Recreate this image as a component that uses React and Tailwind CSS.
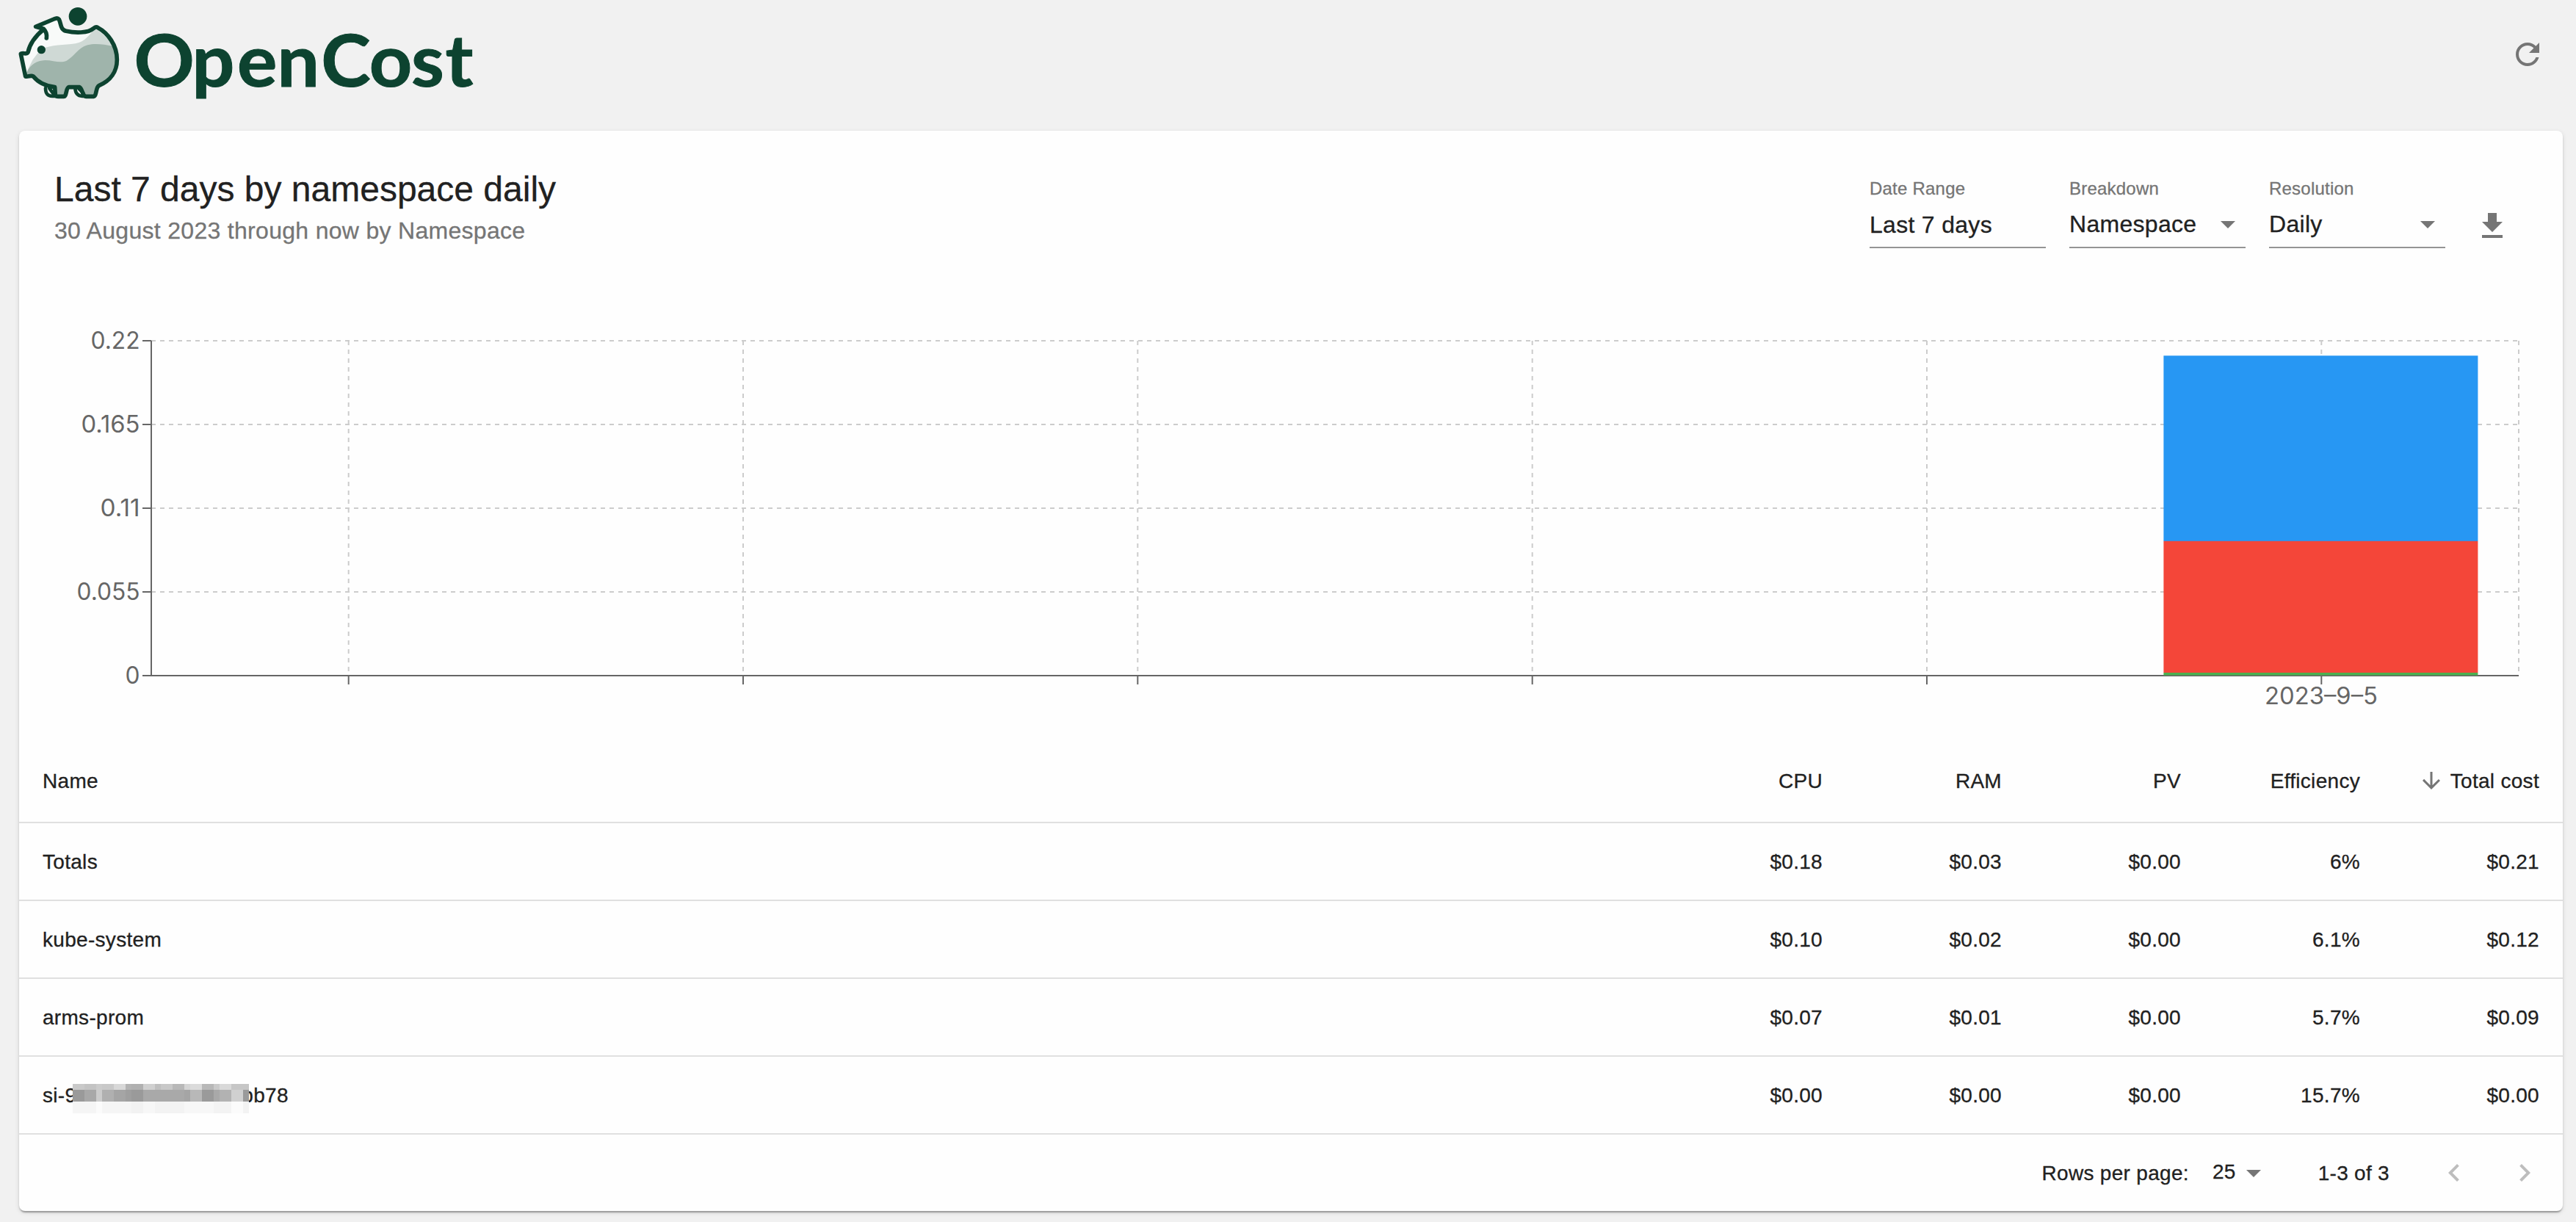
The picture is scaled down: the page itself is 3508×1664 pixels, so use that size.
const ROWS = [
  { name: "Totals", cells: ["$0.18", "$0.03", "$0.00", "6%", "$0.21"] },
  { name: "kube-system", cells: ["$0.10", "$0.02", "$0.00", "6.1%", "$0.12"] },
  { name: "arms-prom", cells: ["$0.07", "$0.01", "$0.00", "5.7%", "$0.09"] },
  { name: "si-9", tail: "bb78", cells: ["$0.00", "$0.00", "$0.00", "15.7%", "$0.00"] },
];

// Redaction mosaic: [span in 8px cells, colour]
const MOSAIC = [
  {
    h: "h-2",
    cells: [[2, "#c9c9c9"], [2, "#c3c3c3"], [1, "#cbcbcb"], [2, "#c8c8c8"], [2, "#d8d8d8"], [1, "#b3b3b3"], [2, "#b0b0b0"], [2, "#d0d0d0"], [1, "#bfbfbf"], [2, "#c8c8c8"], [2, "#b8b8b8"], [1, "#d5d5d5"], [2, "#dbdbdb"], [2, "#b8b8b8"], [1, "#cacaca"], [2, "#d9d9d9"], [3, "#c6c6c6"]],
  },
  {
    h: "h-4",
    cells: [[2, "#9a9a9a"], [2, "#a8a8a8"], [1, "#cccccc"], [2, "#b0b0b0"], [2, "#a5a5a5"], [1, "#9f9f9f"], [2, "#9a9a9a"], [7, "#a9a9a9"], [1, "#a5a5a5"], [2, "#b8b8b8"], [2, "#9a9a9a"], [1, "#a9a9a9"], [2, "#b2b2b2"], [2, "#d0d0d0"], [1, "#9a9a9a"]],
  },
  {
    h: "h-4",
    cells: [[4, "#f5f5f5"], [1, "#fbfbfb"], [5, "#f5f5f5"], [2, "#f2f2f2"], [2, "#f7f7f7"], [5, "#f3f3f3"], [3, "#f7f7f7"], [2, "#f7f7f7"], [3, "#f3f3f3"], [2, "#fbfbfb"], [1, "#f3f3f3"]],
  },
];

const Y_TICKS = [
  { label: "0.22", y: 464, w: 67 },
  { label: "0.165", y: 578, w: 80 },
  { label: "0.11", y: 692, w: 54 },
  { label: "0.055", y: 806, w: 86 },
  { label: "0", y: 920, w: 20 },
];

const X_TICKS = [474.7, 1012, 1549.3, 2086.7, 2624, 3161.3];

function Icon({ d, className }) {
  return (
    <svg viewBox="0 0 24 24" fill="currentColor" className={className}>
      <path d={d} />
    </svg>
  );
}

const ICONS = {
  refresh:
    "M17.65 6.35C16.2 4.9 14.21 4 12 4c-4.42 0-7.99 3.58-7.99 8s3.57 8 7.99 8c3.73 0 6.84-2.55 7.73-6h-2.08c-.82 2.33-3.04 4-5.65 4-3.31 0-6-2.69-6-6s2.69-6 6-6c1.66 0 3.14.69 4.22 1.78L13 11h7V4l-2.35 2.35z",
  dropDown: "M7 10l5 5 5-5z",
  download: "M19 9h-4V3H9v6H5l7 7 7-7zM5 18v2h14v-2H5z",
  arrowDown: "M20 12l-1.41-1.41L13 16.17V4h-2v12.17l-5.58-5.59L4 12l8 8 8-8z",
  left: "M15.41 16.59L10.83 12l4.58-4.59L14 6l-6 6 6 6 1.41-1.41z",
  right: "M8.59 16.59L13.17 12 8.59 7.41 10 6l6 6-6 6-1.41-1.41z",
};

function Logo() {
  return (
    <svg viewBox="0 0 660 160" className="block h-[160px] w-[660px]">
      <g transform="translate(20 4) scale(0.33333)">
        <path
          d="M330 99C304 122 250 123 210 115C186 110 190 84 181 67C176 58 165 64 155 68L84 97L118 106C86 132 62 164 54 202C46 210 34 202 24 208L44 300C54 304 64 294 76 300C96 325 130 338 164 344L166 380H206C212 366 208 344 220 344H266L286 382H328L340 340C390 320 418 280 418 232C418 172 384 130 330 99Z"
          fill="#f8faf9"
        />
        <path
          d="M330 105C302 130 290 158 248 166C204 172 150 170 106 190L74 232L50 280L44 300L76 300L420 240C416 176 380 138 330 105Z"
          fill="#cfd9d5"
        />
        <path
          d="M50 282C66 250 90 236 124 234C158 234 186 248 212 236C246 218 256 184 298 172C330 164 364 170 400 176C416 196 420 220 418 240C414 290 384 326 342 340L328 382H288L266 344H220L206 382H168L162 342C126 338 96 322 76 300L44 300Z"
          fill="#9fb4ab"
        />
        <path d="M126 346L162 346L166 380H148C128 376 126 362 126 346Z M246 344L270 344L286 380H266C248 374 246 360 246 344Z" fill="#f1f1f1" />
        <g fill="none" stroke="#0d4330" strokeWidth="17" strokeLinejoin="round" strokeLinecap="round">
          <path d="M118 108C86 134 62 166 54 202C48 212 36 202 25 208L44 300C54 304 64 294 76 300C96 325 130 340 164 344L166 376C168 381 172 382 178 382H200C214 382 208 346 222 344H264C276 346 276 382 292 382H322C336 380 330 346 344 338C392 318 418 280 418 232C418 172 380 122 340 101C334 97 328 98 322 104C300 124 246 123 210 115C186 110 190 84 181 67C176 60 168 62 160 66L86 97L118 106C128 116 132 130 130 144" />
          <path d="M126 348C126 368 132 380 154 381H172M142 349L156 368" strokeWidth="14" />
          <path d="M247 348C248 368 258 380 276 381H290M262 350L280 368" strokeWidth="14" />
        </g>
        <circle cx="258" cy="55" r="37" fill="#0d4330" />
        <circle cx="109" cy="191" r="17" fill="#0d4330" />
      </g>
      <text
        transform="scale(1.04 1)"
        x="175.5 251.5 310.5 363 420.5 483.5 538.5 583.2"
        y="118"
        fill="#0d4330"
        stroke="#0d4330"
        strokeWidth="1"
        className="font-['Lato',sans-serif] text-[98px] font-bold tracking-normal"
      >
        OpenCost
      </text>
    </svg>
  );
}

function Field({ label, value, select }) {
  return (
    <div className="flex h-[98px] w-60 flex-col border-b-2 border-[#949494]">
      <span className="mt-px h-8 text-2xl leading-8 tracking-[0.22px] text-[#757575]">{label}</span>
      <div className={select ? "mt-2 flex h-12 items-center justify-between" : "mt-[9px] flex h-12 items-center justify-between"}>
        <span className="text-[32px] leading-[48px] tracking-[0.3px]">{value}</span>
        {select && <Icon d={ICONS.dropDown} className="size-12 text-[#757575]" />}
      </div>
    </div>
  );
}

function Chart() {
  return (
    <svg viewBox="26 346 3464 661" className="block h-[661px] w-[3464px] shrink-0">
      <g stroke="#cccccc" strokeWidth="2" strokeDasharray="6 6">
        {Y_TICKS.slice(0, 4).map((t) => (
          <line key={t.label} x1="206" x2="3430" y1={t.y} y2={t.y} />
        ))}
        {X_TICKS.map((x) => (
          <line key={x} x1={x} x2={x} y1="464" y2="920" />
        ))}
        <line x1="3430" x2="3430" y1="464" y2="920" />
      </g>
      <g stroke="#666666" strokeWidth="2">
        <line x1="206" x2="206" y1="464" y2="920" />
        <line x1="206" x2="3430" y1="920" y2="920" />
        {Y_TICKS.map((t) => (
          <line key={t.label} x1="194" x2="206" y1={t.y} y2={t.y} />
        ))}
        {X_TICKS.map((x) => (
          <line key={x} x1={x} x2={x} y1="920" y2="932" />
        ))}
      </g>
      <rect x="2946.4" y="484.3" width="428" height="252.7" fill="#2797f3" />
      <rect x="2946.4" y="736.8" width="428" height="179.4" fill="#f44639" />
      <rect x="2946.4" y="916" width="428" height="3.6" fill="#4caf50" />
      <g fill="#666666" className="font-['Inter',sans-serif] text-[32px] tracking-normal">
        {Y_TICKS.map((t) => (
          <text key={t.label} x="190.5" y={t.y + 11.3} textAnchor="end" textLength={t.w} lengthAdjust="spacingAndGlyphs">
            {t.label}
          </text>
        ))}
        <text x="3161" y="959" textAnchor="middle" textLength="154" lengthAdjust="spacingAndGlyphs">
          2023–9–5
        </text>
      </g>
    </svg>
  );
}

function Mosaic() {
  return (
    <div className="absolute top-[37px] left-[73px] w-60">
      {MOSAIC.map((row, i) => (
        <div key={i} className={`flex ${row.h}`}>
          {row.cells.map(([n, c], j) => (
            <div key={j} style={{ width: n * 8, backgroundColor: c }} />
          ))}
        </div>
      ))}
    </div>
  );
}

const COLS = "grid grid-cols-[1fr_244px_244px_244px_244px_244px] items-center border-b-2 border-[#e0e0e0] text-right";

export default function App() {
  return (
    <div className="flex h-[1664px] w-[3508px] flex-col bg-[#f1f1f1] font-['Liberation_Sans',Arial,sans-serif] text-[28px] tracking-[0.3px] text-[#212121]">
      <header className="flex h-[178px] shrink-0 items-start justify-between pr-[42px]">
        <Logo />
        <Icon d={ICONS.refresh} className="mt-[50px] size-12 text-[#757575]" />
      </header>

      <main className="ml-[26px] flex h-[1471px] w-[3464px] flex-col rounded-lg bg-[#fefefe] shadow-[0_4px_2px_-2px_rgba(0,0,0,0.2),0_2px_2px_0_rgba(0,0,0,0.14),0_2px_6px_0_rgba(0,0,0,0.12)] [-webkit-text-stroke:0.3px]">
        <div className="flex h-[168px] shrink-0 justify-between pt-12 pr-[72px] pl-12">
          <div>
            <h1 className="h-16 text-5xl leading-[64px] tracking-normal">Last 7 days by namespace daily</h1>
            <p className="text-[32px] leading-[48px] text-[#757575]">30 August 2023 through now by Namespace</p>
          </div>
          <div className="flex gap-8 pt-[14px]">
            <Field label="Date Range" value="Last 7 days" />
            <Field label="Breakdown" value="Namespace" select />
            <Field label="Resolution" value="Daily" select />
            <Icon d={ICONS.download} className="mt-11 ml-2 size-12 text-[#757575]" />
          </div>
        </div>

        <Chart />

        <div className={`${COLS} h-[114px] shrink-0 pt-0.5`}>
          <span className="pl-8 text-left">Name</span>
          <span className="pr-8">CPU</span>
          <span className="pr-8">RAM</span>
          <span className="pr-8">PV</span>
          <span className="pr-8">Efficiency</span>
          <span className="flex items-center justify-end gap-2 pr-8 whitespace-nowrap">
            <Icon d={ICONS.arrowDown} className="-mt-0.5 size-9 shrink-0 text-[#757575]" />
            Total cost
          </span>
        </div>
        {ROWS.map((row) => (
          <div key={row.name} className={`${COLS} h-[106px] shrink-0`}>
            <div className="relative flex h-[104px] items-center pt-0.5 pl-8 text-left">
              <span>{row.name}</span>
              {row.tail && <span className="ml-[225px]">{row.tail}</span>}
              {row.tail && <Mosaic />}
            </div>
            {row.cells.map((c, i) => (
              <span key={i} className="pt-0.5 pr-8">{c}</span>
            ))}
          </div>
        ))}

        <div className="flex h-[104px] items-center justify-end pr-1">
          <span className="mt-0.5">Rows per page:</span>
          <span className="-mt-0.5 ml-8">25</span>
          <Icon d={ICONS.dropDown} className="size-12 text-[#757575]" />
          <span className="mt-0.5 ml-16">1-3 of 3</span>
          <Icon d={ICONS.left} className="ml-16 size-12 text-[#bdbdbd]" />
          <Icon d={ICONS.right} className="mr-6 ml-12 size-12 text-[#bdbdbd]" />
        </div>
      </main>
    </div>
  );
}
